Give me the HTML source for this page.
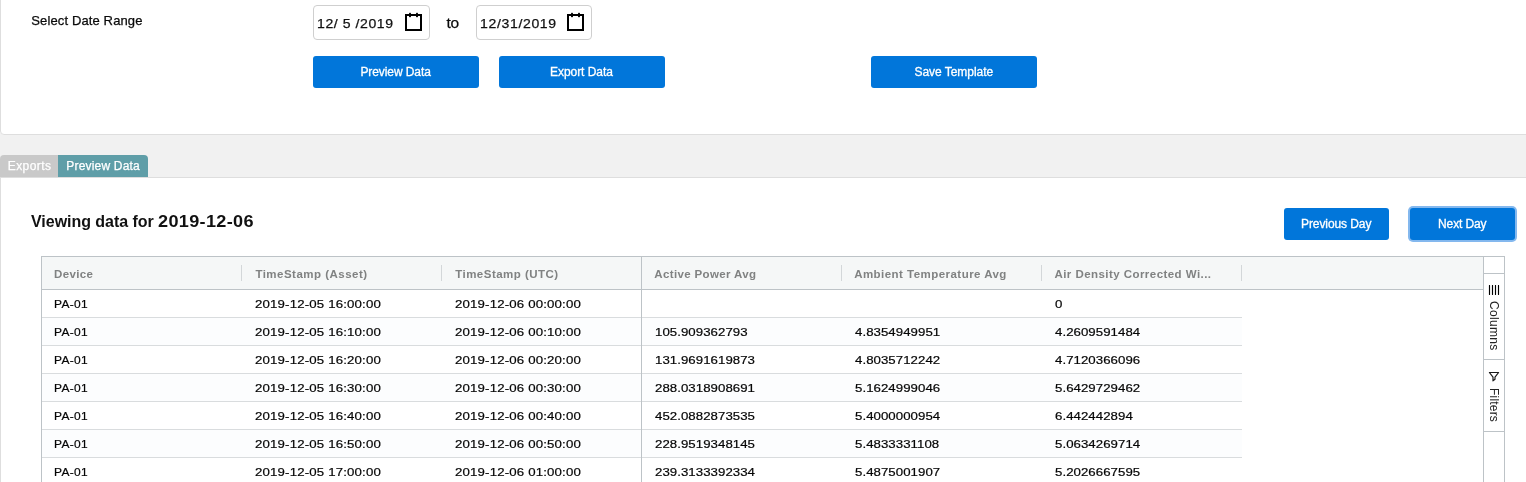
<!DOCTYPE html>
<html>
<head>
<meta charset="utf-8">
<title>Data Export</title>
<style>
*{box-sizing:border-box;}
html,body{margin:0;padding:0;}
body{width:1526px;height:482px;overflow:hidden;background:#f1f1f1;font-family:"Liberation Sans",Arial,sans-serif;color:#1a1a1a;position:relative;}
.abs{position:absolute;}
#wrap{position:absolute;left:0;top:0;width:1526px;height:482px;overflow:hidden;will-change:transform;}
#top{left:0;top:-10px;width:1540px;height:145px;background:#fff;border:1px solid #dedede;border-radius:0 0 0 4px;}
#lbl{-webkit-text-stroke:0.25px #0a0a0a;left:31px;top:12.5px;font-size:13px;line-height:16px;color:#0a0a0a;white-space:nowrap;}
.date{height:35px;top:5px;border:1px solid #cfcfcf;border-radius:4px;background:#fff;}
.date .t{-webkit-text-stroke:0.25px #111;position:absolute;left:5px;top:10px;font-size:13px;line-height:16px;white-space:pre;color:#111;}
.date svg{position:absolute;right:7px;top:6px;}
#to{color:#0a0a0a;-webkit-text-stroke:0.25px #0a0a0a;left:446px;top:14px;font-size:15.5px;line-height:18px;white-space:nowrap;}
.btn{background:#0176da;color:#fff;border-radius:3px;text-align:center;font-size:12px;white-space:nowrap;-webkit-text-stroke:0.3px #fff;}
.b1{top:56px;height:32px;width:166px;line-height:32px;}
#tabs{left:0;top:155px;height:22px;}
.tab{-webkit-text-stroke:0.25px #fff;position:absolute;top:0;height:22px;line-height:22px;color:#fff;font-size:12px;text-align:left;padding-left:8px;white-space:nowrap;}
#bottom{left:0;top:177px;width:1540px;height:320px;background:#fff;border:1px solid #dedede;}
#h{left:31px;top:212px;font-size:16px;line-height:20px;font-weight:bold;color:#111;white-space:nowrap;}
.b2{top:208px;height:32px;line-height:32px;}
#grid{left:41px;top:256px;width:1464px;height:240px;border:1px solid #bdc3c7;background:#fff;font-size:12px;}
#hdr{left:0;top:0;width:1441px;height:33px;background:#f5f7f7;border-bottom:1px solid #bdc3c7;}
.hc{position:absolute;top:0;height:32px;line-height:34px;padding-left:12px;color:#808282;font-size:11.5px;font-weight:bold;white-space:nowrap;}
.hc i{position:absolute;right:0;top:8px;width:1px;height:16px;background:#d3d7d9;}
.row{position:absolute;left:0;width:1200px;height:28px;border-bottom:1px solid #d9dcde;background:#fff;}
.row.odd{background:#fcfdfe;}
.c{-webkit-text-stroke:0.2px #050505;position:absolute;top:0;height:27px;line-height:29px;padding-left:12px;font-size:11.5px;color:#050505;white-space:nowrap;}
#pin{left:599px;top:0;width:1px;height:240px;background:#bdc3c7;}
#side{left:1441px;top:0;width:21px;height:240px;border-left:1px solid #bdc3c7;background:#fff;}
.sb{position:absolute;left:0;width:20px;border-top:1px solid #bdc3c7;border-bottom:1px solid #bdc3c7;}
.sb span{position:absolute;left:2px;writing-mode:vertical-lr;font-size:12px;line-height:16px;color:#222;white-space:nowrap;}
</style>
</head>
<body>
<div id="wrap">
<div id="top" class="abs"></div>
<div id="lbl" class="abs"><span style="letter-spacing:0.130px;position:relative;left:0.24px;">Select Date Range</span></div>
<div class="abs date" style="left:313px;width:117px"><div class="t"><span style="letter-spacing:0.528px;position:relative;left:-1.69px;display:inline-block;transform:scaleX(1.08);transform-origin:0 50%;">12/ 5 /2019</span></div><svg width="17" height="20" viewBox="0 0 17 20"><rect x="1" y="3" width="15" height="15" fill="none" stroke="#000" stroke-width="2"/><rect x="4" y="0.85" width="2" height="4.3" rx="0.7" fill="#000"/><rect x="11" y="0.85" width="2" height="4.3" rx="0.7" fill="#000"/></svg></div>
<div id="to" class="abs"><span style="letter-spacing:-0.400px;position:relative;left:0.50px;">to</span></div>
<div class="abs date" style="left:476px;width:116px"><div class="t"><span style="letter-spacing:0.601px;position:relative;left:-2.37px;display:inline-block;transform:scaleX(1.08);transform-origin:0 50%;">12/31/2019</span></div><svg width="17" height="20" viewBox="0 0 17 20"><rect x="1" y="3" width="15" height="15" fill="none" stroke="#000" stroke-width="2"/><rect x="4" y="0.85" width="2" height="4.3" rx="0.7" fill="#000"/><rect x="11" y="0.85" width="2" height="4.3" rx="0.7" fill="#000"/></svg></div>
<div class="abs btn b1" style="left:313px"><span style="letter-spacing:-0.080px;position:relative;left:-0.40px;">Preview Data</span></div>
<div class="abs btn b1" style="left:499px"><span style="letter-spacing:-0.046px;position:relative;left:-0.59px;">Export Data</span></div>
<div class="abs btn b1" style="left:871px"><span style="letter-spacing:-0.037px;position:relative;left:-0.20px;">Save Template</span></div>

<div id="bottom" class="abs"></div>
<div id="tabs" class="abs">
  <div class="tab" style="left:0;width:58px;background:#c9c9c9;border-radius:4px 0 0 0;"><span style="letter-spacing:0.440px;position:relative;left:-0.28px;">Exports</span></div>
  <div class="tab" style="left:58px;width:90px;background:#5f9ea8;border-radius:0 4px 0 0;"><span style="letter-spacing:0.180px;position:relative;left:0.33px;">Preview Data</span></div>
</div>
<div id="h" class="abs"><span style="letter-spacing:-0.033px;position:relative;left:0.00px;">Viewing data for </span><span style="position:absolute;left:0;top:0"><span style="letter-spacing:0.300px;position:relative;left:127.40px;display:inline-block;transform:scaleX(1.13);transform-origin:0 50%;">2019-12-06</span></span></div>
<div class="abs btn b2" style="left:1284px;width:105px"><span style="letter-spacing:-0.087px;position:relative;left:-0.32px;">Previous Day</span></div>
<div class="abs btn b2" style="left:1410px;width:105px;box-shadow:0 0 0 2px #84b8ee;"><span style="letter-spacing:-0.129px;position:relative;left:-0.29px;">Next Day</span></div>

<div id="grid" class="abs">
  <div id="hdr" class="abs">
    <div class="hc" style="left:0px;width:200px"><span style="letter-spacing:0.380px;position:relative;left:-0.02px;">Device</span><i></i></div>
    <div class="hc" style="left:200px;width:200px"><span style="letter-spacing:0.485px;position:relative;left:1.38px;">TimeStamp (Asset)</span><i></i></div>
    <div class="hc" style="left:400px;width:200px"><span style="letter-spacing:0.480px;position:relative;left:1.20px;">TimeStamp (UTC)</span></div>
    <div class="hc" style="left:600px;width:200px"><span style="letter-spacing:0.361px;position:relative;left:0.31px;">Active Power Avg</span><i></i></div>
    <div class="hc" style="left:800px;width:200px"><span style="letter-spacing:0.463px;position:relative;left:0.13px;">Ambient Temperature Avg</span><i></i></div>
    <div class="hc" style="left:1000px;width:200px"><span style="letter-spacing:0.450px;position:relative;left:0.42px;">Air Density Corrected Wi...</span><i></i></div>
  </div>
  <div class="row" style="top:33px"><div class="c" style="left:0px"><span style="letter-spacing:0.285px;position:relative;left:0.48px;display:inline-block;transform:scaleX(1.04);transform-origin:0 50%;">PA-01</span></div><div class="c" style="left:200px"><span style="letter-spacing:0.144px;position:relative;left:1.30px;display:inline-block;transform:scaleX(1.15);transform-origin:0 50%;">2019-12-05 16:00:00</span></div><div class="c" style="left:400px"><span style="letter-spacing:0.144px;position:relative;left:1.30px;display:inline-block;transform:scaleX(1.15);transform-origin:0 50%;">2019-12-06 00:00:00</span></div><div class="c" style="left:1000px"><span style="letter-spacing:0.046px;position:relative;left:1.04px;display:inline-block;transform:scaleX(1.15);transform-origin:0 50%;">0</span></div></div>
  <div class="row odd" style="top:61px"><div class="c" style="left:0px"><span style="letter-spacing:0.285px;position:relative;left:0.48px;display:inline-block;transform:scaleX(1.04);transform-origin:0 50%;">PA-01</span></div><div class="c" style="left:200px"><span style="letter-spacing:0.144px;position:relative;left:1.30px;display:inline-block;transform:scaleX(1.15);transform-origin:0 50%;">2019-12-05 16:10:00</span></div><div class="c" style="left:400px"><span style="letter-spacing:0.144px;position:relative;left:1.30px;display:inline-block;transform:scaleX(1.15);transform-origin:0 50%;">2019-12-06 00:10:00</span></div><div class="c" style="left:600px"><span style="letter-spacing:0.046px;position:relative;left:1.04px;display:inline-block;transform:scaleX(1.15);transform-origin:0 50%;">105.909362793</span></div><div class="c" style="left:800px"><span style="letter-spacing:0.046px;position:relative;left:1.04px;display:inline-block;transform:scaleX(1.15);transform-origin:0 50%;">4.8354949951</span></div><div class="c" style="left:1000px"><span style="letter-spacing:0.046px;position:relative;left:1.04px;display:inline-block;transform:scaleX(1.15);transform-origin:0 50%;">4.2609591484</span></div></div>
  <div class="row" style="top:89px"><div class="c" style="left:0px"><span style="letter-spacing:0.285px;position:relative;left:0.48px;display:inline-block;transform:scaleX(1.04);transform-origin:0 50%;">PA-01</span></div><div class="c" style="left:200px"><span style="letter-spacing:0.144px;position:relative;left:1.30px;display:inline-block;transform:scaleX(1.15);transform-origin:0 50%;">2019-12-05 16:20:00</span></div><div class="c" style="left:400px"><span style="letter-spacing:0.144px;position:relative;left:1.30px;display:inline-block;transform:scaleX(1.15);transform-origin:0 50%;">2019-12-06 00:20:00</span></div><div class="c" style="left:600px"><span style="letter-spacing:0.046px;position:relative;left:1.04px;display:inline-block;transform:scaleX(1.15);transform-origin:0 50%;">131.9691619873</span></div><div class="c" style="left:800px"><span style="letter-spacing:0.046px;position:relative;left:1.04px;display:inline-block;transform:scaleX(1.15);transform-origin:0 50%;">4.8035712242</span></div><div class="c" style="left:1000px"><span style="letter-spacing:0.046px;position:relative;left:1.04px;display:inline-block;transform:scaleX(1.15);transform-origin:0 50%;">4.7120366096</span></div></div>
  <div class="row odd" style="top:117px"><div class="c" style="left:0px"><span style="letter-spacing:0.285px;position:relative;left:0.48px;display:inline-block;transform:scaleX(1.04);transform-origin:0 50%;">PA-01</span></div><div class="c" style="left:200px"><span style="letter-spacing:0.144px;position:relative;left:1.30px;display:inline-block;transform:scaleX(1.15);transform-origin:0 50%;">2019-12-05 16:30:00</span></div><div class="c" style="left:400px"><span style="letter-spacing:0.144px;position:relative;left:1.30px;display:inline-block;transform:scaleX(1.15);transform-origin:0 50%;">2019-12-06 00:30:00</span></div><div class="c" style="left:600px"><span style="letter-spacing:0.046px;position:relative;left:1.04px;display:inline-block;transform:scaleX(1.15);transform-origin:0 50%;">288.0318908691</span></div><div class="c" style="left:800px"><span style="letter-spacing:0.046px;position:relative;left:1.04px;display:inline-block;transform:scaleX(1.15);transform-origin:0 50%;">5.1624999046</span></div><div class="c" style="left:1000px"><span style="letter-spacing:0.046px;position:relative;left:1.04px;display:inline-block;transform:scaleX(1.15);transform-origin:0 50%;">5.6429729462</span></div></div>
  <div class="row" style="top:145px"><div class="c" style="left:0px"><span style="letter-spacing:0.285px;position:relative;left:0.48px;display:inline-block;transform:scaleX(1.04);transform-origin:0 50%;">PA-01</span></div><div class="c" style="left:200px"><span style="letter-spacing:0.144px;position:relative;left:1.30px;display:inline-block;transform:scaleX(1.15);transform-origin:0 50%;">2019-12-05 16:40:00</span></div><div class="c" style="left:400px"><span style="letter-spacing:0.144px;position:relative;left:1.30px;display:inline-block;transform:scaleX(1.15);transform-origin:0 50%;">2019-12-06 00:40:00</span></div><div class="c" style="left:600px"><span style="letter-spacing:0.046px;position:relative;left:1.04px;display:inline-block;transform:scaleX(1.15);transform-origin:0 50%;">452.0882873535</span></div><div class="c" style="left:800px"><span style="letter-spacing:0.046px;position:relative;left:1.04px;display:inline-block;transform:scaleX(1.15);transform-origin:0 50%;">5.4000000954</span></div><div class="c" style="left:1000px"><span style="letter-spacing:0.046px;position:relative;left:1.04px;display:inline-block;transform:scaleX(1.15);transform-origin:0 50%;">6.442442894</span></div></div>
  <div class="row odd" style="top:173px"><div class="c" style="left:0px"><span style="letter-spacing:0.285px;position:relative;left:0.48px;display:inline-block;transform:scaleX(1.04);transform-origin:0 50%;">PA-01</span></div><div class="c" style="left:200px"><span style="letter-spacing:0.144px;position:relative;left:1.30px;display:inline-block;transform:scaleX(1.15);transform-origin:0 50%;">2019-12-05 16:50:00</span></div><div class="c" style="left:400px"><span style="letter-spacing:0.144px;position:relative;left:1.30px;display:inline-block;transform:scaleX(1.15);transform-origin:0 50%;">2019-12-06 00:50:00</span></div><div class="c" style="left:600px"><span style="letter-spacing:0.046px;position:relative;left:1.04px;display:inline-block;transform:scaleX(1.15);transform-origin:0 50%;">228.9519348145</span></div><div class="c" style="left:800px"><span style="letter-spacing:0.046px;position:relative;left:1.04px;display:inline-block;transform:scaleX(1.15);transform-origin:0 50%;">5.4833331108</span></div><div class="c" style="left:1000px"><span style="letter-spacing:0.046px;position:relative;left:1.04px;display:inline-block;transform:scaleX(1.15);transform-origin:0 50%;">5.0634269714</span></div></div>
  <div class="row" style="top:201px"><div class="c" style="left:0px"><span style="letter-spacing:0.285px;position:relative;left:0.48px;display:inline-block;transform:scaleX(1.04);transform-origin:0 50%;">PA-01</span></div><div class="c" style="left:200px"><span style="letter-spacing:0.144px;position:relative;left:1.30px;display:inline-block;transform:scaleX(1.15);transform-origin:0 50%;">2019-12-05 17:00:00</span></div><div class="c" style="left:400px"><span style="letter-spacing:0.144px;position:relative;left:1.30px;display:inline-block;transform:scaleX(1.15);transform-origin:0 50%;">2019-12-06 01:00:00</span></div><div class="c" style="left:600px"><span style="letter-spacing:0.046px;position:relative;left:1.04px;display:inline-block;transform:scaleX(1.15);transform-origin:0 50%;">239.3133392334</span></div><div class="c" style="left:800px"><span style="letter-spacing:0.046px;position:relative;left:1.04px;display:inline-block;transform:scaleX(1.15);transform-origin:0 50%;">5.4875001907</span></div><div class="c" style="left:1000px"><span style="letter-spacing:0.046px;position:relative;left:1.04px;display:inline-block;transform:scaleX(1.15);transform-origin:0 50%;">5.2026667595</span></div></div>
  <div id="pin" class="abs"></div>
  <div id="side" class="abs">
    <div class="sb" style="top:16px;height:87px"><svg class="abs" style="left:4px;top:11px" width="12" height="10" viewBox="0 0 12 10"><path d="M1.5 0.5v9M4.5 0.5v9M7.5 0.5v9M10.5 0.5v9" stroke="#000" stroke-width="1.15" stroke-linecap="round" fill="none"/></svg><span style="top:27px;letter-spacing:0.3px">Columns</span></div>
    <div class="sb" style="top:102px;height:73px"><svg class="abs" style="left:4px;top:11px" width="12" height="12" viewBox="0 0 12 12"><path d="M1.4 1.5H10.6L7 6.2V8.3L5 9.8V6.2Z" stroke="#1a1a1a" stroke-width="1.2" stroke-linejoin="round" fill="none"/></svg><span style="top:28px;letter-spacing:0.2px">Filters</span></div>
  </div>
</div>
</div>
</body>
</html>
